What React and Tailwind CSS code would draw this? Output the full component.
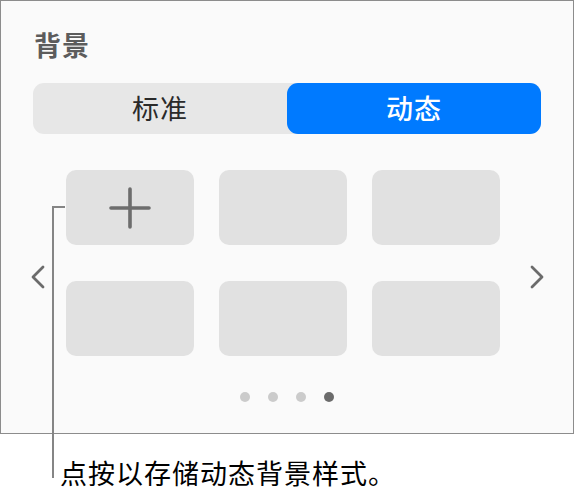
import React from 'react';

const Chevron = ({ dir }) => (
  <svg width="14" height="24" viewBox="0 0 14 24" fill="none" className="shrink-0 mt-[28px]">
    <path
      d={dir === 'left' ? 'M12 2 L2 12 L12 22' : 'M2 2 L12 12 L2 22'}
      stroke="#6b6b6b"
      strokeWidth="2.8"
      strokeLinecap="round"
      strokeLinejoin="round"
    />
  </svg>
);

const PlusIcon = () => (
  <svg width="44" height="44" viewBox="0 0 44 44" fill="none">
    <path d="M22 3 V41 M3 22 H41" stroke="#6d6d6d" strokeWidth="3.6" strokeLinecap="round" />
  </svg>
);

export default function App() {
  const tiles = [0, 1, 2, 3, 4, 5];
  const dots = [false, false, false, true];

  return (
    <div className="relative w-[575px] h-[495px] bg-white font-['Noto_Sans_CJK_SC','Noto_Sans',sans-serif]">
      <div className="w-[574px] h-[434px] border border-[#8c8c8c] bg-[#fafafa] pt-[30px]">
        {/* title */}
        <h2 className="pl-[33px] text-[27px] leading-[27px] tracking-[1px] font-bold text-[#5c5c5c]">背景</h2>

        {/* segmented control */}
        <div className="ml-[32px] mt-[25px] w-[508px] h-[51px] flex rounded-[11px] bg-[#e7e7e7]">
          <div className="flex-1 flex items-center justify-center text-[27px] tracking-[1px] text-[#2a2a2a]">标准</div>
          <div className="flex-1 flex items-center justify-center rounded-[11px] bg-[#007aff] text-[27px] tracking-[1px] font-medium text-white">
            动态
          </div>
        </div>

        {/* template grid */}
        <div className="mt-[36px] flex items-center pl-[30px]">
          <Chevron dir="left" />
          <div className="ml-[21px] grid grid-cols-3 gap-x-[25px] gap-y-[36px] w-[434px]">
            {tiles.map((t) => (
              <div key={t} className="h-[75px] rounded-[10px] bg-[#e1e1e1] flex items-center justify-center">
                {t === 0 && <PlusIcon />}
              </div>
            ))}
          </div>
          <div className="ml-[30px]">
            <Chevron dir="right" />
          </div>
        </div>

        {/* page dots */}
        <div className="mt-[36px] flex justify-center gap-[18px]">
          {dots.map((active, i) => (
            <span
              key={i}
              className={active ? 'w-[10px] h-[10px] rounded-full bg-[#6b6b6b]' : 'w-[10px] h-[10px] rounded-full bg-[#cbcbcb]'}
            />
          ))}
        </div>
      </div>

      {/* caption */}
      <p className="pl-[60px] mt-[24px] text-[27px] leading-[30px] tracking-[1px] text-black">点按以存储动态背景样式。</p>

      {/* callout line */}
      <div className="absolute left-[52px] top-[206px] w-[13px] h-[2px] bg-[#858585]" />
      <div className="absolute left-[52px] top-[206px] w-[2px] h-[272px] bg-[#858585]" />
    </div>
  );
}
